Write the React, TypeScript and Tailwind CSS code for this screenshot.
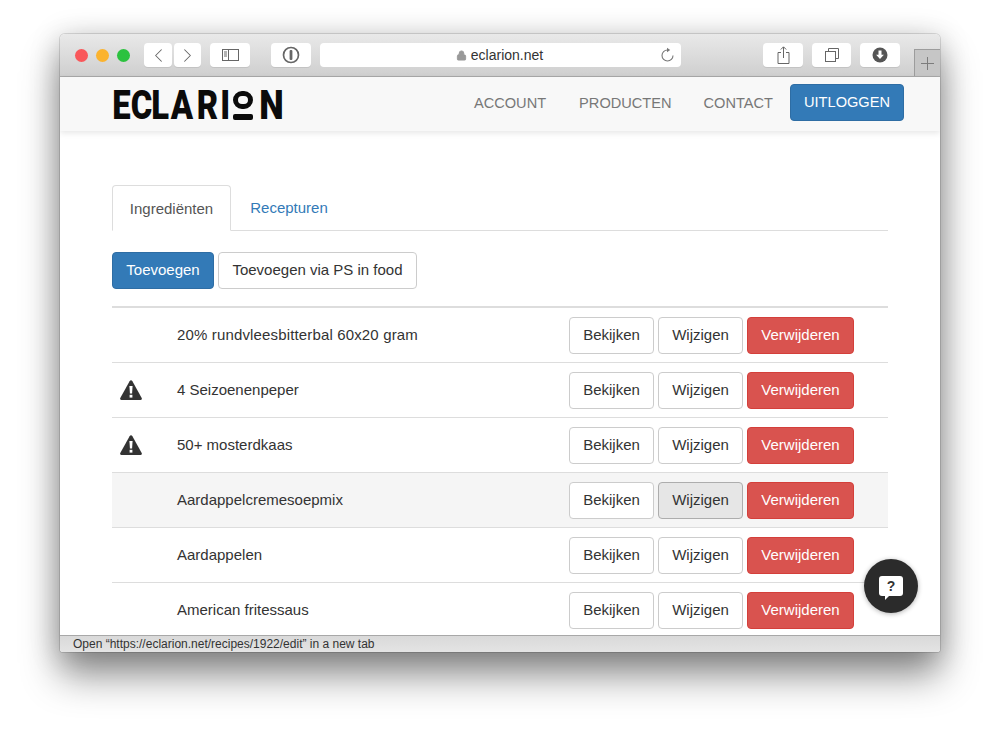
import { ChevronLeft, ChevronRight, Lock } from "lucide-react";

const rows = [
  { name: "20% rundvleesbitterbal 60x20 gram", nameClass: "tracking-[0.15px]" },
  { name: "4 Seizoenenpeper", warn: true },
  { name: "50+ mosterdkaas", warn: true },
  { name: "Aardappelcremesoepmix", hover: true },
  { name: "Aardappelen" },
  { name: "American fritessaus" },
];

// widths and left margins read off the reference logo
const logoLetters = [
  { c: "E", box: "w-[18px]" },
  { c: "C", box: "ml-[3px] w-[17px]" },
  { c: "L", box: "ml-[3px] w-[15px]" },
  { c: "A", box: "ml-[3px] w-[21px]" },
  { c: "R", box: "ml-[6px] w-[19px]" },
  { c: "I", box: "ml-[5px] w-[6px]" },
];

function ToolButton({ className, children }: { className: string; children?: React.ReactNode }) {
  return (
    <div className={`flex h-6 items-center justify-center rounded-[4px] bg-white text-[#666] shadow-[0_1px_0_rgba(0,0,0,0.08)] ${className}`}>
      {children}
    </div>
  );
}

function Toolbar() {
  return (
    <div className="relative flex h-[43px] items-center border-b border-[#a9a9a9] bg-gradient-to-b from-[#e9e9e9] to-[#cfcfcf]">
      <div className="ml-[15px] flex gap-[8px]">
        <span className="size-[13px] rounded-full bg-[#f9575a]" />
        <span className="size-[13px] rounded-full bg-[#fbb32e]" />
        <span className="size-[13px] rounded-full bg-[#2cc23f]" />
      </div>
      <ToolButton className="ml-[14px] w-[28px]">
        <ChevronLeft size={23} strokeWidth={1.1} />
      </ToolButton>
      <ToolButton className="ml-[2px] w-[27px]">
        <ChevronRight size={23} strokeWidth={1.1} />
      </ToolButton>
      <ToolButton className="ml-[9px] w-[40px]">
        <svg width="17" height="12" viewBox="0 0 17 12" fill="none" stroke="#666" strokeWidth="1">
          <rect x="0.5" y="0.5" width="16" height="11" />
          <path d="M6.5 0.5v11M2 3h3M2 5h3M2 7h3" />
        </svg>
      </ToolButton>
      <ToolButton className="ml-[21px] w-[40px]">
        <svg width="18" height="18" viewBox="0 0 18 18" fill="none">
          <circle cx="9" cy="9" r="7.5" stroke="#666" strokeWidth="1.7" />
          <rect x="7.6" y="4" width="2.8" height="10" rx="1" fill="#666" />
        </svg>
      </ToolButton>
      <div className="relative ml-[9px] flex h-6 w-[361px] items-center justify-center rounded-[4px] bg-white pr-[2px] text-[14px] text-[#333]">
        <Lock size={11} className="mr-[4px] fill-[#999] text-[#999]" />
        eclarion.net
        <svg className="absolute right-[6px] top-[4px]" width="15" height="16" viewBox="0 0 15 16" fill="none" stroke="#777" strokeWidth="1.1">
          <path d="M7.5 3A5.5 5.5 0 1 0 13 8.5" />
          <path d="M7 0.8l3.2 2.2L7 5.2z" fill="#777" stroke="none" />
        </svg>
      </div>
      <ToolButton className="ml-[82px] w-[40px]">
        <svg width="13" height="18" viewBox="0 0 13 18" fill="none" stroke="#666" strokeWidth="1">
          <path d="M4 6.5H1v11h11v-11H9M6.5 12V1M3.8 3.5l2.7-2.7 2.7 2.7" />
        </svg>
      </ToolButton>
      <ToolButton className="ml-[9px] w-[39px]">
        <svg width="14" height="14" viewBox="0 0 14 14" fill="none" stroke="#666" strokeWidth="1">
          <rect x="0.5" y="3.5" width="10" height="10" fill="#fff" />
          <path d="M3.5 3.5v-3h10v10h-3" />
        </svg>
      </ToolButton>
      <ToolButton className="ml-[9px] w-[40px]">
        <svg width="16" height="16" viewBox="0 0 16 16">
          <circle cx="8" cy="8" r="7.5" fill="#555" />
          <path d="M6.5 3.5h3v4.2h2.4L8 12 4.1 7.7h2.4z" fill="#fff" />
        </svg>
      </ToolButton>
      <div className="absolute bottom-0 right-0 flex h-[27px] w-[26px] items-center justify-center border-l border-t border-[#9c9c9c] bg-[#c6c6c6]">
        <svg width="13" height="13" viewBox="0 0 13 13" stroke="#7c7c7c" strokeWidth="1">
          <path d="M6.5 0v13M0 6.5h13" />
        </svg>
      </div>
    </div>
  );
}

function Logo() {
  return (
    <div className="mt-[3px] flex h-[30px] w-[171px] items-center font-['Roboto',sans-serif] text-[41px] leading-none font-black text-[#0b0b0b]">
      {logoLetters.map((l) => (
        <span key={l.c} className={`flex justify-center ${l.box}`}>
          <span className="inline-block scale-x-[0.8]">{l.c}</span>
        </span>
      ))}
      <span className="ml-[5px] flex h-[29px] w-[20px] flex-col items-center justify-between">
        <span className="h-[18px] w-[20px] rounded-full border-[5px] border-[#0b0b0b]" />
        <span className="h-[6px] w-[20px] rounded-[2px] bg-[#0b0b0b]" />
      </span>
      <span className="ml-[6px] flex w-[24px] justify-center">
        <span className="inline-block scale-x-[0.85]">N</span>
      </span>
    </div>
  );
}

function Navbar() {
  return (
    <div className="relative z-10 flex h-[54px] items-center justify-between bg-[#f8f8f8] pr-[36px] pb-[1px] pl-[52px] shadow-[0_2px_6px_rgba(0,0,0,0.1)]">
      <Logo />
      <div className="mb-[3px] flex items-center text-[14.6px] text-[#777]">
        <span className="mt-[3px] mr-[33px]">ACCOUNT</span>
        <span className="mt-[3px] mr-[32px]">PRODUCTEN</span>
        <span className="mt-[3px] mr-[17px]">CONTACT</span>
        <span className="flex h-[37px] w-[114px] items-center justify-center rounded-[4px] border border-[#2e6da4] bg-[#337ab7] pt-[1px] text-white">
          UITLOGGEN
        </span>
      </div>
    </div>
  );
}

function WarningIcon() {
  return (
    <svg width="22" height="20" viewBox="0 0 22 20">
      <path d="M9.6 1.2C10.3 0 11.7 0 12.4 1.2L21.7 18c.5 1 0 2-1 2H1.3c-1 0-1.5-1-1-2z" fill="#333" />
      <path d="M9.4 6h3.2l-.5 7.5H9.9z" fill="#fff" />
      <rect x="9.6" y="14.8" width="2.8" height="2.8" fill="#fff" />
    </svg>
  );
}

function Row({ name, nameClass, warn, hover }: { name: string; nameClass?: string; warn?: boolean; hover?: boolean }) {
  return (
    <div className={`flex h-[55px] shrink-0 items-center border-b border-[#ddd] ${hover ? "bg-[#f5f5f5]" : ""}`}>
      <div className="flex w-[65px] pl-[8px]">{warn && <WarningIcon />}</div>
      <div className={`flex-1 text-[#333] ${nameClass ?? ""}`}>{name}</div>
      <div className="mr-[34px] flex gap-[4px]">
        <button className="h-[37px] w-[85px] rounded-[4px] border border-[#ccc] bg-white text-[#333]">Bekijken</button>
        <button className={`h-[37px] w-[85px] rounded-[4px] border ${hover ? "border-[#adadad] bg-[#e6e6e6]" : "border-[#ccc] bg-white"} text-[#333]`}>
          Wijzigen
        </button>
        <button className="h-[37px] w-[107px] rounded-[4px] border border-[#d43f3a] bg-[#d9534f] text-white">Verwijderen</button>
      </div>
    </div>
  );
}

export default function App() {
  return (
    <div className="h-[738px] overflow-hidden bg-white pt-[34px] pl-[60px] font-['Liberation_Sans',Arial,sans-serif] text-[15px]">
      <div className="relative flex h-[618px] w-[880px] flex-col overflow-hidden rounded-t-[5px] rounded-b-[3px] bg-white shadow-[0_0_0_1px_rgba(0,0,0,0.12),0_24px_38px_rgba(0,0,0,0.42),0_4px_30px_rgba(0,0,0,0.22)]">
        <Toolbar />
        <Navbar />
        <div className="min-h-0 flex-1 overflow-hidden px-[52px] pt-[54px]">
          <div className="flex h-[46px] border-b border-[#ddd]">
            <div className="flex h-[46px] w-[119px] items-center justify-center rounded-t-[4px] border border-[#ddd] border-b-white bg-white pt-[2px] text-[#555]">
              Ingrediënten
            </div>
            <div className="flex w-[116px] items-center justify-center pt-[2px] text-[#337ab7]">Recepturen</div>
          </div>
          <div className="mt-[21px] flex gap-[4px]">
            <button className="h-[37px] w-[102px] rounded-[4px] border border-[#2e6da4] bg-[#337ab7] text-white">Toevoegen</button>
            <button className="h-[37px] w-[199px] rounded-[4px] border border-[#ccc] bg-white text-[#333]">Toevoegen via PS in food</button>
          </div>
          <div className="mt-[17px] border-t-2 border-[#ddd]">
            {rows.map((r) => (
              <Row key={r.name} {...r} />
            ))}
          </div>
        </div>
        <div className="h-[17px] shrink-0 border-t border-[#a8a8a8] bg-gradient-to-b from-[#d9d9d9] to-[#e4e4e4] pl-[13px] text-[12px] leading-[16px] text-[#333]">
          Open “https://eclarion.net/recipes/1922/edit” in a new tab
        </div>
        <div className="absolute top-[525px] left-[804px] flex size-[54px] items-center justify-center rounded-full bg-[#2b2b2b] shadow-[0_1px_5px_rgba(0,0,0,0.3)]">
          <div className="relative flex h-[20px] w-[24px] items-center justify-center rounded-[3px] bg-white text-[14px] font-bold text-[#333]">
            ?
            <span className="absolute -bottom-[4px] left-[6px] size-0 border-t-[5px] border-r-[5px] border-t-white border-r-transparent" />
          </div>
        </div>
      </div>
    </div>
  );
}
